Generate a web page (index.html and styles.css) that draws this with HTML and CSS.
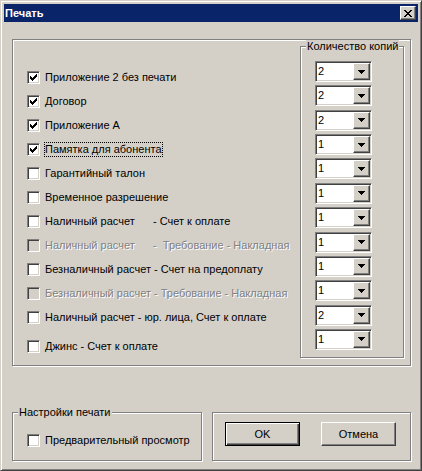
FILE: index.html
```html
<!DOCTYPE html>
<html lang="ru">
<head>
<meta charset="utf-8">
<title>Печать</title>
<link rel="stylesheet" href="styles.css">
</head>
<body>
<div class="window">
  <div class="titlebar">
    <span class="title">Печать</span>
    <span class="close raised">
      <svg width="8" height="7" viewBox="0 0 8 7"><path d="M0 0h2v1h-2z M6 0h2v1h-2z M1 1h2v1h-2z M5 1h2v1h-2z M2 2h4v1h-4z M3 3h2v1h-2z M2 4h4v1h-4z M1 5h2v1h-2z M5 5h2v1h-2z M0 6h2v1h-2z M6 6h2v1h-2z" fill="#000"/></svg>
    </span>
  </div>
  <div class="content">
    <div class="frame main">
      <div class="list">
        <div class="row"><span class="cb checked"><svg width="7" height="7" viewBox="0 0 7 7"><path d="M6 0h1v1h-1z M5 1h2v1h-2z M0 2h1v1h-1z M4 2h3v1h-3z M0 3h2v1h-2z M3 3h3v1h-3z M0 4h5v1h-5z M1 5h3v1h-3z M2 6h1v1h-1z" fill="#000"/></svg></span><span class="lbl">Приложение 2 без печати</span></div>
        <div class="row"><span class="cb checked"><svg width="7" height="7" viewBox="0 0 7 7"><path d="M6 0h1v1h-1z M5 1h2v1h-2z M0 2h1v1h-1z M4 2h3v1h-3z M0 3h2v1h-2z M3 3h3v1h-3z M0 4h5v1h-5z M1 5h3v1h-3z M2 6h1v1h-1z" fill="#000"/></svg></span><span class="lbl">Договор</span></div>
        <div class="row"><span class="cb checked"><svg width="7" height="7" viewBox="0 0 7 7"><path d="M6 0h1v1h-1z M5 1h2v1h-2z M0 2h1v1h-1z M4 2h3v1h-3z M0 3h2v1h-2z M3 3h3v1h-3z M0 4h5v1h-5z M1 5h3v1h-3z M2 6h1v1h-1z" fill="#000"/></svg></span><span class="lbl">Приложение А</span></div>
        <div class="row"><span class="cb checked"><svg width="7" height="7" viewBox="0 0 7 7"><path d="M6 0h1v1h-1z M5 1h2v1h-2z M0 2h1v1h-1z M4 2h3v1h-3z M0 3h2v1h-2z M3 3h3v1h-3z M0 4h5v1h-5z M1 5h3v1h-3z M2 6h1v1h-1z" fill="#000"/></svg></span><span class="lbl focus">Памятка для абонента</span></div>
        <div class="row"><span class="cb"></span><span class="lbl">Гарантийный талон</span></div>
        <div class="row"><span class="cb"></span><span class="lbl">Временное разрешение</span></div>
        <div class="row"><span class="cb"></span><span class="lbl"><span class="part">Наличный расчет</span>- Счет к оплате</span></div>
        <div class="row disabled"><span class="cb"></span><span class="lbl"><span class="part">Наличный расчет</span>-  Требование - Накладная</span></div>
        <div class="row"><span class="cb"></span><span class="lbl">Безналичный расчет - Счет на предоплату</span></div>
        <div class="row disabled"><span class="cb"></span><span class="lbl">Безналичный расчет - Требование - Накладная</span></div>
        <div class="row"><span class="cb"></span><span class="lbl">Наличный расчет - юр. лица, Счет к оплате</span></div>
        <div class="row last"><span class="cb"></span><span class="lbl">Джинс - Счет к оплате</span></div>
      </div>
      <div class="frame copies">
        <div class="legend">Количество копий</div>
        <div class="combos">
          <div class="combo"><span class="val">2</span><span class="btn raised"><svg width="7" height="4" viewBox="0 0 7 4"><path d="M0 0h7v1h-7z M1 1h5v1h-5z M2 2h3v1h-3z M3 3h1v1h-1z" fill="#000"/></svg></span></div>
          <div class="combo"><span class="val">2</span><span class="btn raised"><svg width="7" height="4" viewBox="0 0 7 4"><path d="M0 0h7v1h-7z M1 1h5v1h-5z M2 2h3v1h-3z M3 3h1v1h-1z" fill="#000"/></svg></span></div>
          <div class="combo"><span class="val">2</span><span class="btn raised"><svg width="7" height="4" viewBox="0 0 7 4"><path d="M0 0h7v1h-7z M1 1h5v1h-5z M2 2h3v1h-3z M3 3h1v1h-1z" fill="#000"/></svg></span></div>
          <div class="combo"><span class="val">1</span><span class="btn raised"><svg width="7" height="4" viewBox="0 0 7 4"><path d="M0 0h7v1h-7z M1 1h5v1h-5z M2 2h3v1h-3z M3 3h1v1h-1z" fill="#000"/></svg></span></div>
          <div class="combo"><span class="val">1</span><span class="btn raised"><svg width="7" height="4" viewBox="0 0 7 4"><path d="M0 0h7v1h-7z M1 1h5v1h-5z M2 2h3v1h-3z M3 3h1v1h-1z" fill="#000"/></svg></span></div>
          <div class="combo"><span class="val">1</span><span class="btn raised"><svg width="7" height="4" viewBox="0 0 7 4"><path d="M0 0h7v1h-7z M1 1h5v1h-5z M2 2h3v1h-3z M3 3h1v1h-1z" fill="#000"/></svg></span></div>
          <div class="combo"><span class="val">1</span><span class="btn raised"><svg width="7" height="4" viewBox="0 0 7 4"><path d="M0 0h7v1h-7z M1 1h5v1h-5z M2 2h3v1h-3z M3 3h1v1h-1z" fill="#000"/></svg></span></div>
          <div class="combo"><span class="val">1</span><span class="btn raised"><svg width="7" height="4" viewBox="0 0 7 4"><path d="M0 0h7v1h-7z M1 1h5v1h-5z M2 2h3v1h-3z M3 3h1v1h-1z" fill="#000"/></svg></span></div>
          <div class="combo"><span class="val">1</span><span class="btn raised"><svg width="7" height="4" viewBox="0 0 7 4"><path d="M0 0h7v1h-7z M1 1h5v1h-5z M2 2h3v1h-3z M3 3h1v1h-1z" fill="#000"/></svg></span></div>
          <div class="combo"><span class="val">1</span><span class="btn raised"><svg width="7" height="4" viewBox="0 0 7 4"><path d="M0 0h7v1h-7z M1 1h5v1h-5z M2 2h3v1h-3z M3 3h1v1h-1z" fill="#000"/></svg></span></div>
          <div class="combo"><span class="val">2</span><span class="btn raised"><svg width="7" height="4" viewBox="0 0 7 4"><path d="M0 0h7v1h-7z M1 1h5v1h-5z M2 2h3v1h-3z M3 3h1v1h-1z" fill="#000"/></svg></span></div>
          <div class="combo"><span class="val">1</span><span class="btn raised"><svg width="7" height="4" viewBox="0 0 7 4"><path d="M0 0h7v1h-7z M1 1h5v1h-5z M2 2h3v1h-3z M3 3h1v1h-1z" fill="#000"/></svg></span></div>
        </div>
      </div>
    </div>
    <div class="bottom">
      <div class="frame settings">
        <div class="legend">Настройки печати</div>
        <div class="row single"><span class="cb"></span><span class="lbl">Предварительный просмотр</span></div>
      </div>
      <div class="frame actions">
        <span class="btnpush default">OK</span>
        <span class="btnpush">Отмена</span>
      </div>
    </div>
  </div>
</div>
</body>
</html>
```
FILE: styles.css
```css
* { box-sizing: border-box; }
html, body { margin: 0; padding: 0; }
body {
  width: 422px;
  height: 471px;
  background: #d4d0c8;
  font-family: "Liberation Sans", Arial, sans-serif;
  font-size: 11px;
  color: #000;
}
.window {
  width: 422px;
  height: 471px;
  background: #d4d0c8;
  border: 1px solid;
  border-color: #d4d0c8 #404040 #404040 #d4d0c8;
  box-shadow: inset 1px 1px 0 #fff, inset -1px -1px 0 #808080;
  padding: 3px;
  display: flex;
  flex-direction: column;
}
.titlebar {
  height: 18px;
  background: #0a246a;
  display: flex;
  align-items: center;
  justify-content: space-between;
  padding: 0 2px 0 1px;
}
.title {
  color: #fff;
  font-weight: bold;
  font-size: 11px;
  line-height: 13px;
}
.raised {
  background: #d4d0c8;
  border: 1px solid;
  border-color: #fff #404040 #404040 #fff;
  box-shadow: inset -1px -1px 0 #808080;
}
.close {
  width: 16px;
  height: 14px;
  display: flex;
  align-items: center;
  justify-content: center;
}
.close svg { display: block; }
.content {
  padding: 17px 0 0 8px;
}
.frame {
  border: 1px solid #808080;
  box-shadow: inset 1px 1px 0 #fff, 1px 1px 0 #fff;
}
.main {
  width: 399px;
  height: 327px;
  display: flex;
  padding: 6px 6px 0 0;
}
.list {
  width: 287px;
  padding: 19.5px 0 0 14px;
}
.row {
  height: 24px;
  display: flex;
  align-items: center;
}
.row.last { margin-top: 5px; }
.cb {
  width: 13px;
  height: 13px;
  flex: none;
  background: #fff;
  border: 1px solid;
  border-color: #808080 #fff #fff #808080;
  box-shadow: inset 1px 1px 0 #404040, inset -1px -1px 0 #d4d0c8;
  display: flex;
  align-items: flex-start;
  justify-content: flex-start;
  padding: 2px 0 0 2px;
}
.cb svg { display: block; }
.lbl {
  margin-left: 5px;
  line-height: 13px;
  white-space: pre;
}
.lbl.focus {
  margin-left: 4px;
  border: 1px dotted #000;
}
.part {
  display: inline-block;
  width: 108px;
}
.disabled .cb { background: #d4d0c8; }
.disabled .lbl {
  color: #808080;
  text-shadow: 1px 1px 0 #fff;
}
.copies {
  width: 104px;
  height: 312px;
}
.legend {
  margin: -7px 0 0 5px;
  padding: 0 1px;
  line-height: 13px;
  background: #d4d0c8;
  width: fit-content;
  white-space: nowrap;
}
.combos {
  margin: 8px 0 0 14px;
  display: flex;
  flex-direction: column;
  gap: 3.36px;
}
.combo {
  width: 57px;
  height: 21px;
  background: #fff;
  border: 1px solid;
  border-color: #808080 #fff #fff #808080;
  box-shadow: inset 1px 1px 0 #404040, inset -1px -1px 0 #d4d0c8;
  padding: 1px;
  display: flex;
}
.combo .val {
  flex: 1;
  padding-left: 1px;
  line-height: 17px;
}
.combo .btn {
  width: 17px;
  height: 17px;
  display: flex;
  align-items: center;
  justify-content: center;
}
.combo .btn svg { display: block; }
.bottom {
  margin-top: 46px;
  display: flex;
  gap: 10px;
}
.settings {
  width: 190px;
  height: 49px;
}
.row.single {
  height: 13px;
  margin: 15px 0 0 14px;
}
.actions {
  width: 199px;
  height: 49px;
  display: flex;
  align-items: flex-start;
  padding: 9px 0 0 12px;
  gap: 21px;
}
.btnpush {
  width: 75px;
  height: 24px;
  display: flex;
  align-items: center;
  justify-content: center;
  background: #d4d0c8;
  border: 1px solid;
  border-color: #fff #404040 #404040 #fff;
  box-shadow: inset -1px -1px 0 #808080;
}
.btnpush.default {
  border: 1px solid #000;
  box-shadow: inset 1px 1px 0 #fff, inset -1px -1px 0 #404040, inset -2px -2px 0 #808080;
}
```
